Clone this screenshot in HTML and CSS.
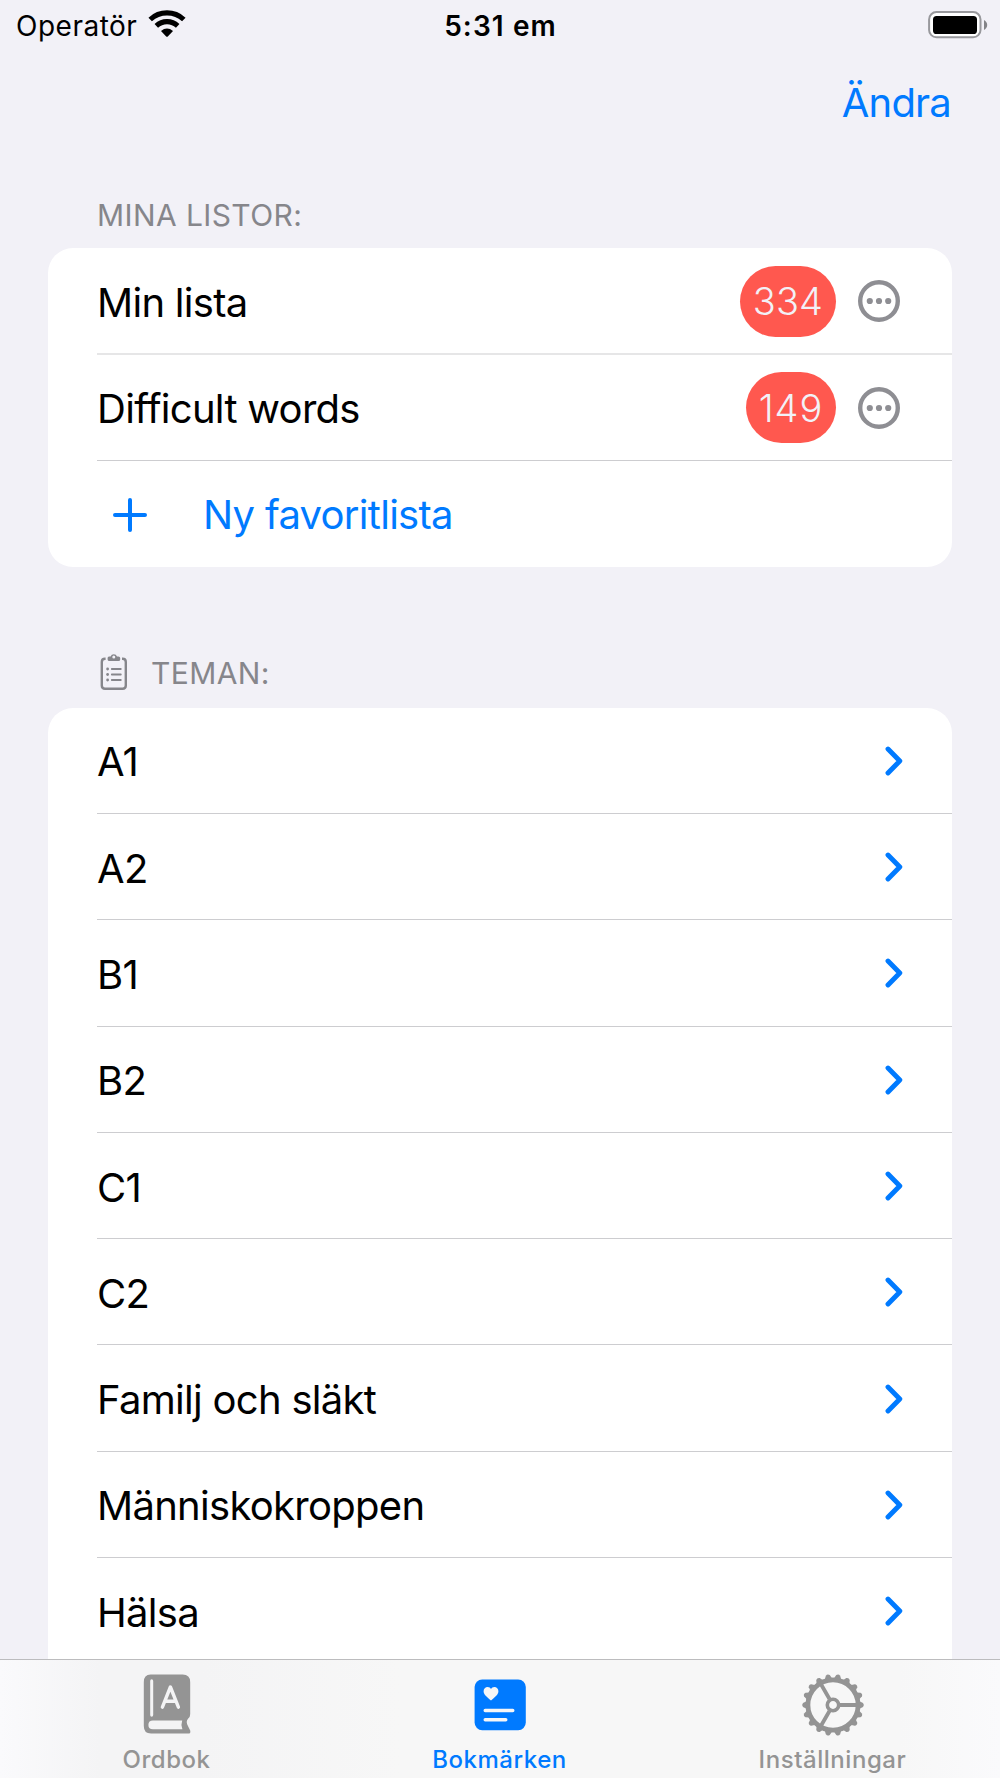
FILE: index.html
```html
<!DOCTYPE html>
<html lang="sv">
<head>
<meta charset="utf-8">
<title>Bokmärken</title>
<link rel="stylesheet" href="styles.css">
</head>
<body>
<svg class="defs" width="0" height="0">
  <symbol id="chevron" viewBox="0 0 18 30"><path d="M3 3 14.8 15 3 27" fill="none" stroke="currentColor" stroke-width="4.9" stroke-linecap="round" stroke-linejoin="round"/></symbol>
  <symbol id="more" viewBox="0 0 42 42"><circle cx="21" cy="21" r="18.8" fill="none" stroke="currentColor" stroke-width="4.4"/><circle cx="11.8" cy="21" r="3.1" fill="currentColor"/><circle cx="21" cy="21" r="3.1" fill="currentColor"/><circle cx="30.2" cy="21" r="3.1" fill="currentColor"/></symbol>
  <path id="tooth" d="M26 -3.9 30 -2Q31.8 0 30 2L26 3.9Z"/>
</svg>
<div class="screen">
  <header class="status">
    <div class="carrier"><span class="carrier-name">Operatör</span>
      <svg class="wifi" width="38" height="28" viewBox="0 0 38 28"><g fill="none" stroke="#000" stroke-width="5.1"><path d="M2.2 9.5A24.5 24.5 0 0 1 35.8 9.5"/><path d="M8.3 15.9A15.6 15.6 0 0 1 29.7 15.9"/></g><path d="M13 21Q19 16.2 25 21L19.8 26.4Q19 27.1 18.2 26.4Z"/></svg>
    </div>
    <div class="time">5:31 em</div>
    <div class="power"><svg width="60" height="28" viewBox="0 0 60 28"><rect x="1.1" y="1.1" width="51.4" height="25.2" rx="7.4" fill="#fff" stroke="#98989c" stroke-width="2"/><rect x="5" y="5" width="44" height="18" rx="3.6"/><path d="M56 9Q59.2 10.8 59.2 14T56 19Z" fill="#838387"/></svg></div>
  </header>
  <nav class="nav"><a class="edit">Ändra</a></nav>
  <main class="content">
    <h2 class="heading"><span>MINA LISTOR:</span></h2>
    <ul class="card">
      <li class="row soft"><span class="label">Min lista</span><span class="badge b334"><span>334</span></span><svg class="more"><use href="#more"/></svg></li>
      <li class="row"><span class="label">Difficult words</span><span class="badge b149"><span>149</span></span><svg class="more"><use href="#more"/></svg></li>
      <li class="row add"><svg class="plus" viewBox="0 0 34 34"><path d="M17 2V32M2 17H32" stroke="currentColor" stroke-width="4" stroke-linecap="round"/></svg><span class="label">Ny favoritlista</span></li>
    </ul>
    <h2 class="heading themes">
      <svg class="clip" width="28" height="38" viewBox="0 0 28 38"><path d="M5.6 5.8H5Q1.8 5.8 1.8 9V32.6Q1.8 35.8 5 35.8H22.6Q25.8 35.8 25.8 32.6V9Q25.8 5.8 22.6 5.8H22" fill="none" stroke="currentColor" stroke-width="2.4"/><path fill-rule="evenodd" fill="currentColor" d="M9 3.4H10.6A3.4 3.4 0 0 1 17 3.4H18.4Q20.2 3.4 20.2 5V6.4Q20.2 8 18.4 8H9.4Q7.6 8 7.6 6.4V5Q7.6 3.4 9 3.4ZM13.8 2.4A1.5 1.5 0 1 0 13.8 5.4A1.5 1.5 0 1 0 13.8 2.4Z"/><path d="M11.8 16H20.8M11.8 21.5H20.8M11.8 27H20.8" stroke="currentColor" stroke-width="1.8" stroke-linecap="round"/><g fill="currentColor"><circle cx="7.6" cy="16" r="1.4"/><circle cx="7.6" cy="21.5" r="1.4"/><circle cx="7.6" cy="27" r="1.4"/></g></svg>
      <span>TEMAN:</span></h2>
    <ul class="card open">
      <li class="row"><span class="label">A1</span><svg class="chev"><use href="#chevron"/></svg></li>
      <li class="row"><span class="label">A2</span><svg class="chev"><use href="#chevron"/></svg></li>
      <li class="row"><span class="label">B1</span><svg class="chev"><use href="#chevron"/></svg></li>
      <li class="row"><span class="label">B2</span><svg class="chev"><use href="#chevron"/></svg></li>
      <li class="row"><span class="label">C1</span><svg class="chev"><use href="#chevron"/></svg></li>
      <li class="row"><span class="label">C2</span><svg class="chev"><use href="#chevron"/></svg></li>
      <li class="row"><span class="label">Familj och släkt</span><svg class="chev"><use href="#chevron"/></svg></li>
      <li class="row"><span class="label">Människokroppen</span><svg class="chev"><use href="#chevron"/></svg></li>
      <li class="row"><span class="label">Hälsa</span><svg class="chev"><use href="#chevron"/></svg></li>
    </ul>
  </main>
  <footer class="tabs">
    <a class="tab"><svg width="64" height="64" viewBox="0 0 64 64"><path fill="currentColor" fill-rule="evenodd" d="M15.6 1.6H47.6Q55.2 1.6 55.2 9.2V41Q55.2 44 53.2 45.4Q50.2 48.4 53.2 53.4L55.2 57.4Q56 60.6 53 60.6H16Q8.8 60.6 8.8 53V9.2Q8.8 1.6 15.6 1.6ZM18 47.6H47.2Q45.6 52 47.4 56.2H18Q13.4 56.2 13.4 51.9Q13.4 47.6 18 47.6ZM16.6 6.2Q15.2 6.2 15.2 8V42Q15.2 43.7 16.6 43.7Q18.2 43.7 18.2 42V8Q18.2 6.2 16.6 6.2Z"/><path d="M27.4 34.2 35.4 14 43.4 34.2M30.2 28.2H40.6" fill="none" stroke="#f4f4f5" stroke-width="3.4" stroke-linecap="round" stroke-linejoin="round"/></svg><span>Ordbok</span></a>
    <a class="tab active"><svg width="64" height="64" viewBox="0 0 64 64"><rect x="6.6" y="6.4" width="51.2" height="50.8" rx="7.6" fill="currentColor"/><path fill="#f6f6f7" d="M23 27.4C18.8 23.9 15.6 21.4 15.6 18.2C15.6 15.6 17.4 13.9 19.6 13.9C21.2 13.9 22.4 14.8 23 16.1C23.6 14.8 24.8 13.9 26.4 13.9C28.6 13.9 30.4 15.6 30.4 18.2C30.4 21.4 27.2 23.9 23 27.4Z"/><path d="M17.2 37.5H44.8M17.2 46.8H37.8" stroke="#f6f6f7" stroke-width="3.4" stroke-linecap="round"/></svg><span>Bokmärken</span></a>
    <a class="tab"><svg width="64" height="64" viewBox="-32 -32 64 64"><g fill="none" stroke="currentColor"><circle r="25.1" stroke-width="4.8"/><circle r="5.7" stroke-width="3.6"/><path d="M7 0H24M-3.5 6.06-12 20.8M-3.5-6.06-12-20.8" stroke-width="3.8"/></g><g fill="currentColor"><use href="#tooth"/><use href="#tooth" transform="rotate(20)"/><use href="#tooth" transform="rotate(40)"/><use href="#tooth" transform="rotate(60)"/><use href="#tooth" transform="rotate(80)"/><use href="#tooth" transform="rotate(100)"/><use href="#tooth" transform="rotate(120)"/><use href="#tooth" transform="rotate(140)"/><use href="#tooth" transform="rotate(160)"/><use href="#tooth" transform="rotate(180)"/><use href="#tooth" transform="rotate(200)"/><use href="#tooth" transform="rotate(220)"/><use href="#tooth" transform="rotate(240)"/><use href="#tooth" transform="rotate(260)"/><use href="#tooth" transform="rotate(280)"/><use href="#tooth" transform="rotate(300)"/><use href="#tooth" transform="rotate(320)"/><use href="#tooth" transform="rotate(340)"/></g></svg><span>Inställningar</span></a>
  </footer>
</div>
</body>
</html>
```
FILE: styles.css
```css
* { box-sizing: border-box; }
body { margin: 0; background: #f2f1f7; font-family: Inter, "Liberation Sans", sans-serif; color: #000; }
svg { display: block; flex: none; }
.defs { position: absolute; }
.screen { width: 1000px; height: 1778px; display: flex; flex-direction: column; overflow: hidden; }
.status { flex: none; height: 50px; display: grid; grid-template-columns: 1fr auto 1fr; padding: 0 12px 0 16px; font-size: 28px; line-height: 52px; }
.carrier { display: flex; gap: 11px; letter-spacing: 0.5px; }
.carrier-name { width: 121px; white-space: nowrap; }
.wifi { margin-top: 10px; }
.time { font-weight: 600; letter-spacing: 1.1px; margin-left: -3px; }
.power { display: flex; justify-content: flex-end; padding-top: 11px; }
.nav { flex: none; height: 106px; padding: 0 49px; display: flex; justify-content: flex-end; color: #007aff; font-size: 40px; line-height: 106px; letter-spacing: -0.8px; }
.content { flex: 1; min-height: 0; overflow: hidden; padding: 0 48px; }
.heading { display: flex; align-items: center; margin: 0; height: 92px; padding: 25px 0 0 49px; color: #86868b; font-size: 30px; font-weight: 400; letter-spacing: 0.4px; white-space: nowrap; }
.heading.themes { height: 140.8px; padding: 71px 0 0 52px; gap: 23px; }
.clip { margin-top: -2px; }
.card { list-style: none; margin: 0; padding: 0; background: #fff; border-radius: 25px; overflow: hidden; }
.card.open { border-radius: 25px 25px 0 0; }
.row { height: 106.3px; display: flex; align-items: center; padding: 0 49px; font-size: 40px; letter-spacing: -0.71px; white-space: nowrap; background: linear-gradient(#cdcdd0, #cdcdd0) right bottom / 855px 1px no-repeat; }
.row.soft { height: 107px; padding-bottom: 1px; background: linear-gradient(#e6e6e7, #e6e6e7) right bottom / 855px 2px no-repeat; }
.row.soft + .row { height: 105.6px; }
.row:last-child { background: none; }
.label { flex: 1; padding-top: 2px; }
.badge { height: 71px; border-radius: 36px; background: #ff584f; color: #f2f1f7; font-size: 38px; font-weight: 350; display: flex; align-items: center; justify-content: center; margin-right: 22px; }
.b334 { width: 96px; letter-spacing: 0.1px; }
.b149 { width: 90px; letter-spacing: 1px; }
.more { width: 42px; height: 42px; color: #8e8e93; margin-right: 3px; }
.add { color: #007aff; }
.plus { width: 34px; height: 34px; margin: 2px 56px 0 16px; }
.chev { width: 18px; height: 30px; color: #007aff; margin-right: 0.5px; }
.tabs { flex: none; height: 119px; display: grid; grid-template-columns: repeat(3, 1fr); padding-right: 1px; border-top: 1px solid #bcbcbe; background: linear-gradient(90deg, #fafafc 0, #f4f4f5 100px, #f4f4f5 200px, #f7f7f7 400px, #f7f7f7 900px, #fafafc 1000px); }
.tab { display: flex; flex-direction: column; align-items: center; padding-top: 13px; color: #949494; font-size: 24px; font-weight: 500; letter-spacing: 0.55px; line-height: 36px; white-space: nowrap; }
.tab span { margin-top: 5px; }
.tab.active { color: #007aff; }
```
